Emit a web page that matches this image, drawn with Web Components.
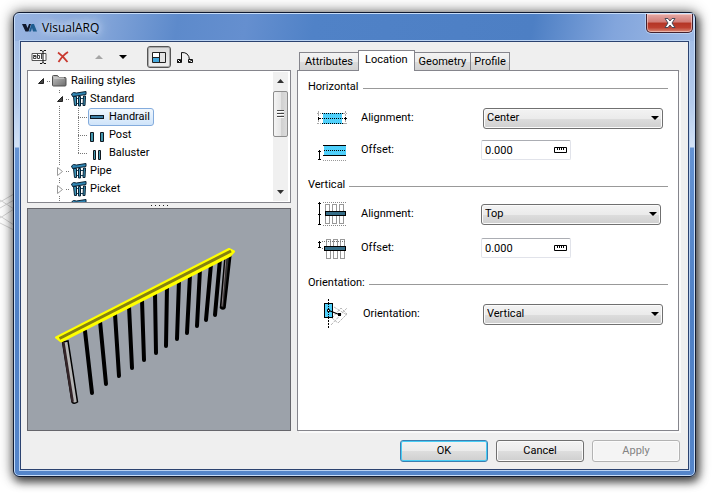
<!DOCTYPE html>
<html lang="en">
<head>
<meta charset="utf-8">
<title>VisualARQ</title>
<style>
  html, body { margin: 0; }
  body {
    box-sizing: border-box;
    min-height: 100vh;
    padding: 12px 16px 19px 13px;
    display: flex;
    position: relative;
    background: #fff;
    overflow: hidden;
    color: #000;
    font: 11px/16px Roboto, "Liberation Sans", sans-serif;
  }
</style>
</head>
<body>
<va-backdrop></va-backdrop>
<va-window caption="VisualARQ">
  <va-toolbar slot="toolbar"></va-toolbar>
  <va-tabs slot="tabs" labels="Attributes,Location,Geometry,Profile" active="Location"></va-tabs>

  <va-tree slot="tree">
    <va-item label="Railing styles" icon="folder" state="open">
      <va-item label="Standard" icon="railing" state="open" guide>
        <va-item label="Handrail" icon="handrail" guide selected></va-item>
        <va-item label="Post" icon="post" guide></va-item>
        <va-item label="Baluster" icon="baluster" guide last></va-item>
      </va-item>
      <va-item label="Pipe" icon="railing" state="closed" guide></va-item>
      <va-item label="Picket" icon="railing" state="closed" guide></va-item>
      <va-item label="" icon="railing" state="closed" guide></va-item>
    </va-item>
  </va-tree>
  <va-preview slot="preview"></va-preview>

  <va-section slot="panel" heading="Horizontal">
    <va-field label="Alignment:" kind="select" value="Center" icon="halign" wide></va-field>
    <va-field label="Offset:" kind="number" value="0.000" icon="hoffset"></va-field>
  </va-section>
  <va-section slot="panel" heading="Vertical" loose>
    <va-field label="Alignment:" kind="select" value="Top" icon="valign"></va-field>
    <va-field label="Offset:" kind="number" value="0.000" icon="voffset"></va-field>
  </va-section>
  <va-section slot="panel" heading="Orientation:">
    <va-field label="Orientation:" kind="select" value="Vertical" icon="orient" wide inset></va-field>
  </va-section>

  <va-button slot="actions" label="OK" primary></va-button>
  <va-button slot="actions" label="Cancel"></va-button>
  <va-button slot="actions" label="Apply" disabled></va-button>
</va-window>

<script>
const slats = (y1, y2) => [8, 15, 22].map(x =>
  `<rect x="${x + .5}" y="${y1 + .5}" width="4" height="${y2 - y1}" fill="#fff" stroke="#999"/>`).join('');

const ICONS = {
  folder: `<svg width="16" height="16" viewBox="0 0 16 16"><defs><linearGradient id="f" x2="1" y2="1"><stop stop-color="#c4c4c4"/><stop offset="1" stop-color="#6c6c6c"/></linearGradient></defs><path d="M.5 12V3.500q0-1 1-1h4l1.500 2h6q1 0 1 1V12q0 1-1 1h-11.500q-1 0-1-1z" fill="url(#f)" stroke="#505050"/><path d="M2 5h10" stroke="#ddd"/></svg>`,
  railing: `<svg width="16" height="16" viewBox="0 0 16 16"><path d="M6 7.500h9M5 12.500h9" stroke="#1b4a66"/><path d="M2.500 5.500h3v9h-2zM7.500 5.500h2v9.500h-2zM12.500 5h2l-.5 9.500h-2z" fill="#3b93b8" stroke="#0a2234"/><path d="M.5 3l2-1.500 3 .5 9.500-1.500v3L1.500 5.500z" fill="#2f86b4" stroke="#0a2234"/></svg>`,
  handrail: `<svg width="16" height="16" viewBox="0 0 16 16"><rect x=".5" y="6.500" width="13" height="3" fill="#3c7fa6" stroke="#101820"/></svg>`,
  post: `<svg width="16" height="16" viewBox="0 0 16 16"><path d="M.5 5.500h3v9h-3zM10.500 5.500h3v9h-3z" fill="#4397ae" stroke="#101820"/></svg>`,
  baluster: `<svg width="16" height="16" viewBox="0 0 16 16"><path d="M3.500 5.500h2v9h-2zM8.500 5.500h2v9h-2z" fill="#4397ae" stroke="#101820"/></svg>`,
  halign: `<svg width="32" height="28" viewBox="0 0 32 28"><path fill="#4fd0fb" d="M6 9h19v11H6z"/><path d="M1.500 7v13M28.500 7v13M0 9.500h4M26 9.500h4M0 19.500h4M26 19.500h4" stroke="#aaa" stroke-dasharray="2 1"/><path d="M5 9.500h21M5 19.500h21M3 14.500h25" stroke="#000" stroke-dasharray="1 1"/><path d="M1 14.500h3M27 14.500h3M1.500 13v3M28.500 13v3" stroke="#000"/></svg>`,
  hoffset: `<svg width="32" height="28" viewBox="0 0 32 28"><path fill="#4fd0fb" d="M7 10h22v9H7z"/><path d="M6 9.500h23M6 19.500h23" stroke="#000"/><path d="M7 14.500h22" stroke="#000" stroke-dasharray="1 1"/><path d="M6 24.500h23" stroke="#999" stroke-dasharray="1 1"/><path d="M2.500 14v10M1 15.500h3M1 23.500h3" stroke="#000"/></svg>`,
  valign: `<svg width="32" height="28" viewBox="0 0 32 28">${slats(4, 23)}<path d="M6 2.500h23M6 25.500h23" stroke="#888" stroke-dasharray="1 1"/><rect x="8.500" y="11.500" width="20" height="4" fill="#356d87" stroke="#000"/><path d="M2.500 2v23M1 3.500h3M1 14.500h3M1 24.500h3" stroke="#000"/></svg>`,
  voffset: `<svg width="32" height="28" viewBox="0 0 32 28"><g transform="translate(1)">${slats(5, 24)}<path d="M4 7.500h24M4 14.500h4" stroke="#777" stroke-dasharray="1 1"/><rect x="6.500" y="12.500" width="21" height="4" fill="#356d87" stroke="#000"/><path d="M1.500 7v7M0 8.500h3M0 13.500h3" stroke="#000"/></g></svg>`,
  orient: `<svg width="32" height="30" viewBox="0 0 32 30"><path d="M11.500 0v30" stroke="#000" stroke-dasharray="2 1"/><path d="M15 19l9-10 6 6-9 9zM14 26l16-17M17 8l13 8" fill="none" stroke="#b8b8b8" stroke-dasharray="3 1"/><rect x="7.500" y="4.500" width="8" height="14" fill="#4fd0fb" stroke="#000"/><path d="M11.500 5v13" stroke="#000" stroke-dasharray="1 1"/><path d="M12 11.500l10 4" stroke="#000" stroke-width="1.200"/><path d="M10.500 10.500h2v2h-2z" fill="#fff" stroke="#000"/><path d="M21 14h3v3h-3z"/></svg>`,
  ruler: `<svg width="13" height="6" viewBox="0 0 13 6"><path d="M.5.5h12v5H.5z" fill="#fff" stroke="#000"/><path d="M3.500 1v2M5.500 1v2M7.500 1v2M9.500 1v2" stroke="#000"/></svg>`,
  down: `<svg width="8" height="4" viewBox="0 0 8 4"><path d="M0 0h8L4 4z"/></svg>`,
};

const define = (name, render) => customElements.define(name, class extends HTMLElement {
  constructor() { super(); this.attachShadow({ mode: 'open' }); }
  connectedCallback() {
    this.shadowRoot.innerHTML = render(this, key => this.getAttribute(key) || '');
  }
});

define('va-backdrop', () => `
<style>:host { position: absolute; left: 0; top: 190px; line-height: 0; }</style>
<svg width="14" height="46" viewBox="0 0 14 46" aria-hidden="true"><path d="M0 12L14 4M0 28l14-9M0 10l14 9M0 26l14 9M0 18l14-8M0 33l14 7" fill="none" stroke="#d4d4d4"/></svg>`);

define('va-window', (el, a) => `
<style>
  :host {
    flex: 1; min-width: 0; box-sizing: border-box; position: relative;
    display: flex; flex-direction: column;
    border: 1px solid #101a30; border-radius: 6px;
    padding: 0 6px 6px;
    background: linear-gradient(#9db9e4 0, #b4cbec 90px, #d3e2f6 134px, #6593d3 135px, #4f80c5 65%, #5585c9);
    box-shadow: inset 0 0 0 1px #c6dcf8, 2px 4px 9px 1px rgba(0,0,0,.62), 0 0 14px 1px rgba(0,0,0,.45);
  }
  header {
    margin: 1px -5px 0; height: 27px; padding: 0 1px 0 7px;
    display: flex; align-items: center; gap: 5px;
    border-radius: 5px 5px 0 0;
    background: linear-gradient(100deg, #98b4e1 0, #86a7da 12%, #5d8acb 24%, #658fcf 34%, #5082c7 44%, #4d7fc4 76%, #82a5dc 88%, #9fbae5);
  }
  h1 {
    margin: 0; flex: 1; font: 12px/18px "Open Sans", "Noto Sans", sans-serif;
    text-shadow: 0 0 6px #d7e5fa, 0 0 10px #d7e5fa, 0 0 14px #d7e5fa;
  }
  .close {
    align-self: flex-start; width: 47px; height: 19px; padding: 0;
    display: grid; place-items: center;
    border: 1px solid #43202c; border-top: 0; border-radius: 0 0 5px 5px;
    background: linear-gradient(#e5a9a6, #d17c76 45%, #b43525 50%, #bd4030 75%, #d98b78);
    box-shadow: inset 0 0 0 1px rgba(255,220,215,.55), 0 0 0 1px rgba(220,235,255,.5);
  }
  main {
    flex: 1; display: flex; flex-direction: column; gap: 9px;
    border: 1px solid #2c4370; outline: 1px solid #b9d2f2;
    background: #efefef; padding: 0 8px 7px 6px;
  }
  .body {
    flex: 1; display: grid; column-gap: 6px;
    grid-template-columns: minmax(0, 264fr) minmax(0, 383fr);
    grid-template-rows: 28px minmax(0, 1fr);
  }
  .left { display: grid; grid-template-rows: minmax(0, 133fr) 5px minmax(0, 223fr); min-height: 0; }
  .grip { place-self: center; width: 17px; height: 1px; background: repeating-linear-gradient(90deg, #222 0 1px, transparent 1px 4px); }
  .panel {
    display: flex; flex-direction: column; gap: 16px;
    background: #fff; border: 1px solid #85858c; padding: 8px 10px; margin-right: 1px;
    box-shadow: 2px 2px 0 #fafafa;
  }
  footer { display: flex; justify-content: flex-end; gap: 8px; }
</style>
<header>
  <svg width="15" height="8" viewBox="0 0 15 8"><path d="M0 0h4l1.500 4L7 0h2L6.500 7.500H3.500z" fill="#10182c"/><path d="M7 7.500L9.500 0h2.500l3 7.500h-4L10 4 9 7.500z" fill="#1c5c90"/></svg>
  <h1>${a('caption')}</h1>
  <button class="close" aria-label="Close"><svg width="12" height="10" viewBox="0 0 12 10"><path d="M1 .5h3l2 2.500L8 .5h3L8 5l3 4.500H8L6 7 4 9.500H1L4 5z" fill="#fff" stroke="#4a4a58"/></svg></button>
</header>
<main>
  <div class="body">
    <slot name="toolbar"></slot>
    <slot name="tabs"></slot>
    <div class="left"><slot name="tree"></slot><div class="grip"></div><slot name="preview"></slot></div>
    <div class="panel"><slot name="panel"></slot></div>
  </div>
  <footer><slot name="actions"></slot></footer>
</main>`);

define('va-toolbar', () => `
<style>
  :host { display: flex; align-items: center; padding: 2px 0 0; }
  button { box-sizing: border-box; width: 24px; height: 22px; padding: 0; border: 1px solid transparent; border-radius: 3px; background: none; display: grid; place-items: center; }
  .gap { width: 12px; }
  [aria-pressed=true] { border: 1px solid #555; background: linear-gradient(#dadada, #efefef); box-shadow: inset 0 0 0 1px #aaa; margin-right: 2px; }
</style>
<button aria-label="Rename"><svg width="16" height="16" viewBox="0 0 16 16"><path d="M1 4.500h14v7H1z" fill="#fff" stroke="#555"/><path d="M2 6.500h3v3H2.500v-2H5M6.500 5v4.500h2v-3h-2M10.500 5v5" fill="none" stroke="#444"/><path d="M9 1.500h2l1 1 1-1h2M12 2v12M9 14.500h2l1-1 1 1h2" fill="none" stroke="#111"/></svg></button>
<button aria-label="Delete"><svg width="12" height="12" viewBox="0 0 12 12"><path d="M1 1.500Q6 5 10.500 11M11 1Q6 4 1.500 11" fill="none" stroke="#c93a30" stroke-width="1.800"/></svg></button>
<span class="gap"></span>
<button aria-label="Move up" disabled><svg width="8" height="4" viewBox="0 0 8 4"><path d="M0 4h8L4 0z" fill="#a5a5a5"/></svg></button>
<button aria-label="Move down">${ICONS.down}</button>
<span class="gap"></span>
<button aria-label="Show preview" aria-pressed="true"><svg width="14" height="11" viewBox="0 0 14 11"><path d="M.5.5h13v10H.5z" fill="#fff" stroke="#202020"/><path d="M1 6h6v4H1z" fill="#45a8dc"/><path d="M7.500 1v9M1 5.500h6" stroke="#202020"/><path d="M8 1h5v9H8z" fill="#e2e2e2"/></svg></button>
<button aria-label="Edit profile"><svg width="16" height="13" viewBox="0 0 16 13"><path d="M0 11.500h4.500V1.500Q12 1 12.500 9" fill="none" stroke="#111"/><path d="M.5 8.500h3v3h-3zM11.500 8.500h4v3h-4z" fill="#fff" stroke="#111"/><path d="M1 11l2-2M12 11l3-2" stroke="#111"/></svg></button>`);

define('va-tabs', (el, a) => `
<style>
  :host { display: flex; align-items: flex-end; padding: 0 2px; position: relative; }
  [role=tablist] { display: flex; align-items: flex-end; }
  button {
    box-sizing: border-box; height: 18px; padding: 0 4px; margin-right: -1px; font: inherit; line-height: 16px; color: inherit;
    border: 1px solid #85858c; border-bottom: 0; background: linear-gradient(#f3f3f3, #ebebeb 50%, #dcdcdc 51%, #d2d2d2);
  }
  button:first-child { padding: 0 5px; }
  button:last-child { padding: 0 3px; }
  button[aria-selected=true] { height: 21px; padding: 0 6px 2px; margin-bottom: -1px; background: #fff; }
</style>
<div role="tablist">${a('labels').split(',').map(t =>
  `<button role="tab" aria-selected="${t === a('active')}">${t}</button>`).join('')}</div>`);

define('va-tree', () => `
<style>
  :host { display: grid; grid-template-columns: minmax(0, 1fr) 17px; grid-template-rows: minmax(0, 1fr); border: 1px solid #85858c; background: #fff; overflow: hidden; min-height: 0; box-sizing: border-box; contain: size; }
  .view { overflow: hidden; padding: 1px 0 0 6px; min-height: 0; }
  .bar { display: flex; flex-direction: column; align-items: center; background: #f0f0f0; margin: 1px 2px 1px 0; padding: 7px 0; }
  .thumb { width: 13px; height: 44px; margin: 8px 0 auto; border: 1px solid #8c8c8c; border-radius: 2px; display: grid; place-items: center;
    background: linear-gradient(90deg, #f4f4f4, #e6e6e6 50%, #cfcfcf 51%, #dcdcdc); }
  .thumb i { width: 7px; height: 8px; background: repeating-linear-gradient(#444 0 1px, #fff 1px 2px, transparent 2px 3px); }
</style>
<div class="view" role="tree"><slot></slot></div>
<div class="bar" aria-hidden="true">
  <svg width="7" height="4" viewBox="0 0 7 4"><path d="M0 4h7L3.500 0z" fill="#333"/></svg>
  <div class="thumb"><i></i></div>
  <svg width="7" height="4" viewBox="0 0 7 4"><path d="M0 0h7L3.500 4z" fill="#333"/></svg>
</div>`);

define('va-item', (el, a) => {
  const state = a('state');
  const mark = state === 'open' ? '<path d="M6.500 1.500v5h-5z" fill="#444" stroke="#222"/>'
    : state === 'closed' ? '<path d="M1.500.5v8l5-4z" fill="#fff" stroke="#999"/>' : '';
  return `
<style>
  :host { display: block; position: relative; }
  :host([guide])::before {
    content: ""; position: absolute; left: 6px; top: 0; bottom: 0; width: 1px;
    background: repeating-linear-gradient(#777 0 1px, transparent 1px 2px);
  }
  :host([guide][last])::before { bottom: 9px; }
  .row { position: relative; display: flex; align-items: center; height: 18px; }
  .mark { width: 13px; height: 12px; display: grid; place-items: center; }
  .mark.node { background: #fff; }
  .dots { width: 3px; height: 1px; background: repeating-linear-gradient(90deg, #777 0 1px, transparent 1px 2px); }
  .leaf { width: 10px; margin-left: 6px; }
  .content { box-sizing: border-box; display: flex; align-items: center; gap: 3px; height: 18px; padding: 0 3px 0 1px; border: 1px solid transparent; border-radius: 3px; white-space: nowrap; }
  :host([selected]) .content { border-color: #84acdd; background: linear-gradient(#f1f7fd, #cfe4fa); }
  .content svg { display: block; }
  .kids { margin-left: 19px; }
</style>
<div class="row" role="treeitem">${state
    ? `<span class="mark node"><svg width="8" height="9" viewBox="0 0 8 9">${mark}</svg></span><span class="dots"></span>`
    : '<span class="dots leaf"></span>'}
  <span class="content">${ICONS[a('icon')]}<span>${a('label')}</span></span>
</div>
<div class="kids" role="group"><slot></slot></div>`;
});

const BALUSTERS = [
  [85, 331, 92, 393], [100, 321, 106, 384], [115, 314, 119, 376], [129, 306, 132, 368],
  [142, 300, 144, 360], [155, 293, 156, 353], [167, 286, 166, 346], [179, 280, 177, 339],
  [190, 275, 187, 333], [200, 269, 197, 326], [211, 264, 206, 320], [220, 259, 215, 315]];

define('va-preview', () => `
<style>
  :host { display: flex; border: 1px solid #66666c; background: #9ca2aa; min-height: 0; overflow: hidden; box-sizing: border-box; contain: size; }
  svg { width: 100%; height: 100%; }
</style>
<svg viewBox="28 209 262 221" role="img" aria-label="Railing preview">
  <g stroke="#000" stroke-linecap="round" fill="none">
    ${BALUSTERS.map(([x1, y1, x2, y2]) => `<path d="M${x1} ${y1}L${x2} ${y2}" stroke-width="4"/>`).join('')}
    <path d="M62.500 342l9.500 60q2 2.500 5.500 0L68 341z" fill="#b5b5b5" stroke-width="1.500"/>
    <path d="M63.500 343l9 58" stroke="#332428" stroke-width="2.500"/>
    <path d="M225.500 257l-4.500 50.500q2 2 3.500 0L230.500 254z" fill="#333" stroke-width="2.500"/>
    <path d="M226 258l-4 48" stroke="#8a7f84" stroke-width="1"/>
  </g>
  <path d="M56 337.500l173-88.500 5 2.500-3.500 4L61 341.500z" fill="#ff0" stroke="#ff0" stroke-width="2" stroke-linejoin="round"/>
  <path d="M59.500 338.500L231 251" stroke="#85800f" stroke-width="3"/>
</svg>`);

define('va-section', (el, a) => `
<style>
  :host { display: grid; row-gap: 10px; }
  h2 { margin: 0 0 2px; font: inherit; display: flex; align-items: center; gap: 4px; }
  h2::after { content: ""; flex: 1; height: 1px; margin-top: 2px; background: #999; }
  :host([loose]) { row-gap: 12px; }
  :host([loose]) h2 { margin-bottom: -2px; }
</style>
<h2>${a('heading')}</h2><slot></slot>`);

define('va-field', (el, a) => `
<style>
  :host { display: grid; grid-template-columns: 44px 120px minmax(0, 1fr); align-items: center; height: 22px; padding: 0 7px 0 9px; }
  :host([wide]) { grid-template-columns: 44px 122px minmax(0, 1fr); padding-right: 5px; }
  :host([inset]) { grid-template-columns: 46px 120px minmax(0, 1fr); }
  .icon { display: flex; align-items: center; height: 22px; }
  .icon svg { flex: none; }
  .box { display: grid; align-items: center; }
  .box > * { grid-area: 1 / 1; }
  .box > svg { justify-self: end; margin-right: 4px; pointer-events: none; }
  .number { width: 90px; }
  select, input { box-sizing: border-box; width: 100%; margin: 0; font: inherit; color: inherit; outline: 0; }
  select {
    appearance: none; height: 21px; padding: 0 16px 0 3px; border: 1px solid #707070; border-radius: 3px;
    background: linear-gradient(#f3f3f3, #ebebeb 50%, #dddddd 51%, #cfcfcf); box-shadow: inset 0 0 0 1px #fbfbfb;
  }
  input { height: 20px; padding: 0 24px 0 3px; border: 1px solid #e1e3ea; border-top-color: #abadb3; border-radius: 2px; background: #fff; }
</style>
<span class="icon">${ICONS[a('icon')]}</span>
<label for="control">${a('label')}</label>
${a('kind') === 'select'
  ? `<span class="box"><select id="control"><option>${a('value')}</option></select>${ICONS.down}</span>`
  : `<span class="box number"><input id="control" type="text" value="${a('value')}">${ICONS.ruler}</span>`}`);

define('va-button', (el, a) => `
<style>
  :host { display: block; flex: 0 1 88px; }
  button {
    box-sizing: border-box; width: 100%; height: 22px; padding: 0; font: inherit; color: #000;
    border: 1px solid #707070; border-radius: 3px;
    background: linear-gradient(#f3f3f3, #ebebeb 50%, #dddddd 51%, #cfcfcf); box-shadow: inset 0 0 0 1px #fbfbfb;
  }
  :host([primary]) button { border-color: #3c7fb1; box-shadow: inset 0 0 0 1px #48cdf5; }
  button:disabled { color: #838383; border-color: #b3b3b3; background: #f4f4f4; }
</style>
<button${el.hasAttribute('disabled') ? ' disabled' : ''}>${a('label')}</button>`);
</script>
</body>
</html>
